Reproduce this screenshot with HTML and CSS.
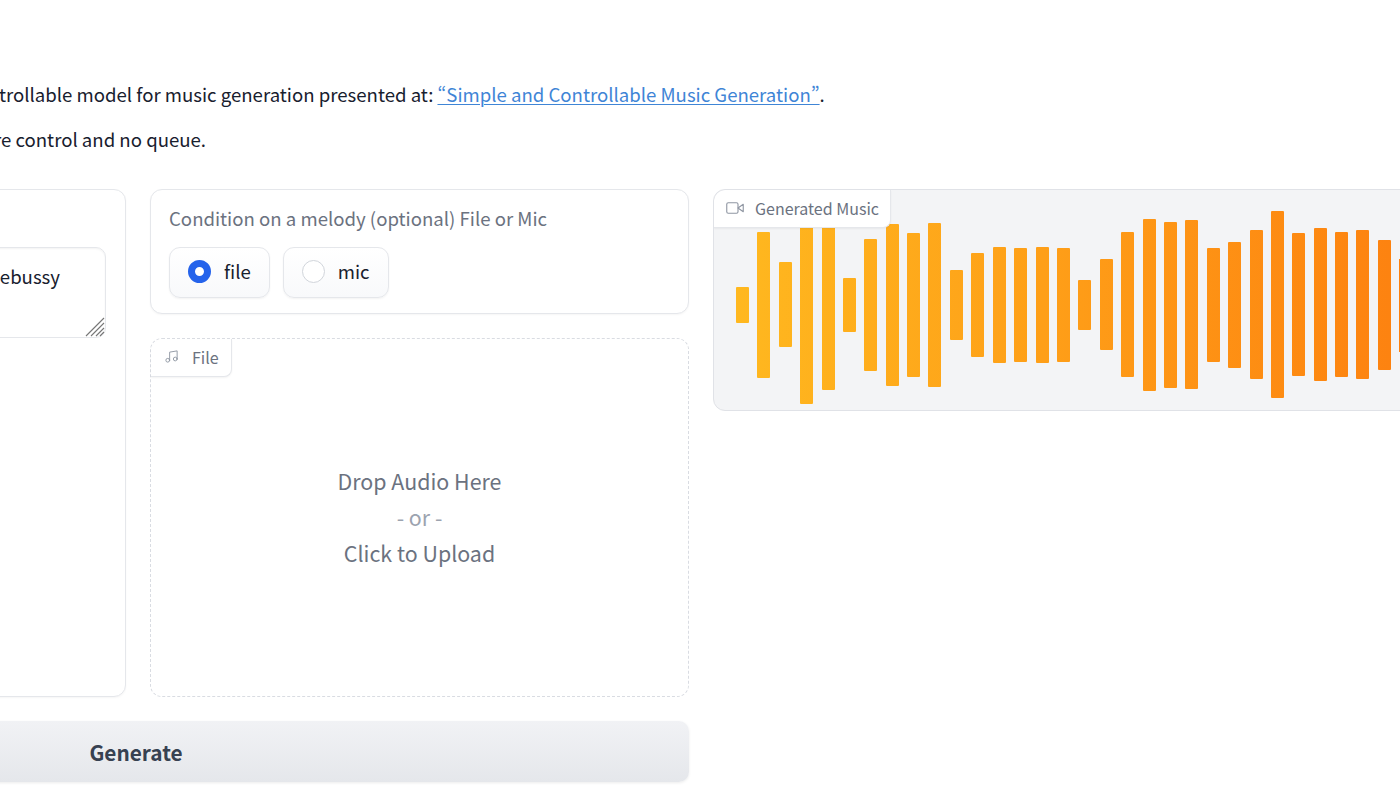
FILE: index.html
```html
<!DOCTYPE html>
<html lang="en">
<head>
<meta charset="utf-8">
<title>MusicGen</title>
<link rel="stylesheet" href="styles.css">
</head>
<body>
<main class="page">
  <section class="intro">
    <p>trollable model for music generation presented at: <a href="#">“Simple and Controllable Music Generation”</a>.</p>
    <p class="clipped">re control and no queue.</p>
  </section>
  <section class="columns">
    <div class="inputs">
      <div class="input-row">
        <div class="card prompt-card">
          <div class="prompt-box">
            <span>ebussy</span>
            <svg class="resize" viewBox="0 0 20 20" width="20" height="20" aria-hidden="true">
              <path d="M1 19 19 1M6 19 19 6M11 19 19 11M15 19 19 15"/>
            </svg>
          </div>
        </div>
        <div class="melody">
          <div class="card radio-card">
            <div class="label">Condition on a melody (optional) File or Mic</div>
            <div class="radios">
              <div class="pill"><span class="dot dot-on"></span>file</div>
              <div class="pill"><span class="dot"></span>mic</div>
            </div>
          </div>
          <div class="upload">
            <div class="tab tab-file">
              <svg viewBox="0 0 24 24" width="15" height="15" aria-hidden="true"><path d="M9 18V5l12-2v13"/><circle cx="6" cy="18" r="3"/><circle cx="18" cy="16" r="3"/></svg>
              <span>File</span>
            </div>
            <div class="drop">
              <div>Drop Audio Here</div>
              <div class="or">- or -</div>
              <div>Click to Upload</div>
            </div>
          </div>
        </div>
      </div>
      <button class="generate" type="button">Generate</button>
    </div>
    <div class="output">
      <div class="tab tab-out">
        <svg viewBox="0 0 24 24" width="18" height="18" aria-hidden="true"><polygon points="23 7 16 12 23 17 23 7"/><rect x="1" y="5" width="15" height="14" rx="2" ry="2"/></svg>
        <span>Generated Music</span>
      </div>
      <svg class="wave" width="680" height="222" viewBox="713 189 680 222" aria-hidden="true">
        <defs>
          <linearGradient id="amber" gradientUnits="userSpaceOnUse" x1="736" y1="0" x2="1400" y2="0">
            <stop offset="0" stop-color="#ffb81f"/>
            <stop offset="1" stop-color="#fd8210"/>
          </linearGradient>
        </defs>
        <g fill="url(#amber)">
          <rect rx="1" x="736" y="287" width="13" height="36"/>
          <rect rx="1" x="757" y="232" width="13" height="146"/>
          <rect rx="1" x="779" y="262" width="13" height="85"/>
          <rect rx="1" x="800" y="206" width="13" height="198"/>
          <rect rx="1" x="822" y="220" width="13" height="170"/>
          <rect rx="1" x="843" y="278" width="13" height="54"/>
          <rect rx="1" x="864" y="239" width="13" height="132"/>
          <rect rx="1" x="886" y="224" width="13" height="162"/>
          <rect rx="1" x="907" y="233" width="13" height="144"/>
          <rect rx="1" x="928" y="223" width="13" height="164"/>
          <rect rx="1" x="950" y="270" width="13" height="70"/>
          <rect rx="1" x="971" y="253" width="13" height="104"/>
          <rect rx="1" x="993" y="247" width="13" height="116"/>
          <rect rx="1" x="1014" y="248" width="13" height="114"/>
          <rect rx="1" x="1036" y="247" width="13" height="116"/>
          <rect rx="1" x="1057" y="248" width="13" height="114"/>
          <rect rx="1" x="1078" y="280" width="13" height="50"/>
          <rect rx="1" x="1100" y="259" width="13" height="91"/>
          <rect rx="1" x="1121" y="232" width="13" height="145"/>
          <rect rx="1" x="1143" y="219" width="13" height="172"/>
          <rect rx="1" x="1164" y="222" width="13" height="166"/>
          <rect rx="1" x="1185" y="220" width="13" height="169"/>
          <rect rx="1" x="1207" y="248" width="13" height="114"/>
          <rect rx="1" x="1228" y="242" width="13" height="126"/>
          <rect rx="1" x="1250" y="230" width="13" height="149"/>
          <rect rx="1" x="1271" y="211" width="13" height="187"/>
          <rect rx="1" x="1292" y="233" width="13" height="143"/>
          <rect rx="1" x="1314" y="228" width="13" height="153"/>
          <rect rx="1" x="1335" y="232" width="13" height="145"/>
          <rect rx="1" x="1356" y="230" width="13" height="149"/>
          <rect rx="1" x="1378" y="240" width="13" height="130"/>
        </g>
      </svg>
      <svg class="wave-extra" width="13" height="93" viewBox="0 0 13 93" aria-hidden="true"><rect width="13" height="93" fill="#fd8210"/></svg>
    </div>
  </section>
</main>
</body>
</html>
```
FILE: styles.css
```css
* { box-sizing: border-box; }
html, body { margin: 0; height: 100%; overflow: hidden; background: #fff; }
body {
  font-family: "Noto Sans CJK SC", "Noto Sans", sans-serif;
  font-feature-settings: "pwid";
  color: #18202e;
  font-size: 18.6px;
}
.page { width: 1400px; height: 800px; overflow: hidden; padding-top: 80px; }
.intro p { margin: 0 0 17px -1px; line-height: 28px; white-space: nowrap; }
.intro p.clipped { margin-left: -6px; }
.intro a { color: #3f85d6; text-decoration: underline; text-underline-offset: 2px; text-decoration-thickness: 1px; }
.columns {
  display: grid;
  grid-template-columns: 1102px 1102px;
  column-gap: 24px;
  margin-left: -413px;
  margin-top: 36px;
  align-items: start;
}
.inputs { display: flex; flex-direction: column; gap: 24px; }
.input-row { display: grid; grid-template-columns: 539px 539px; column-gap: 24px; }
.card {
  background: #fff;
  border: 1px solid #e5e7eb;
  border-radius: 12px;
  box-shadow: 0 1px 2px rgba(0,0,0,.04);
}
.prompt-card { height: 508px; padding: 57px 19px 0; }
.prompt-box {
  position: relative;
  height: 91px;
  border: 1px solid #e5e7eb;
  border-radius: 10px;
  box-shadow: inset 0 1px 2px rgba(0,0,0,.05);
  padding: 14px 45px 0 0;
  text-align: right;
  line-height: 28px;
}
.resize { position: absolute; right: 0; bottom: 0; fill: none; stroke: #777; stroke-width: 1.1; }
.melody { display: flex; flex-direction: column; gap: 24px; }
.radio-card { height: 125px; padding: 14px 18px 0; }
.label { color: #6b7280; line-height: 28px; }
.radios { display: flex; gap: 13px; margin-top: 15px; }
.pill {
  display: flex;
  align-items: center;
  gap: 13px;
  height: 51px;
  padding: 0 18px 4px;
  border: 1px solid #e5e7eb;
  border-radius: 11px;
  background: linear-gradient(#fff, #f8f9fb);
  box-shadow: 0 1px 2px rgba(0,0,0,.05);
}
.dot {
  width: 23px;
  height: 23px;
  margin-top: 2px;
  border-radius: 50%;
  border: 1px solid #d1d5db;
  background: #fff;
}
.dot-on { border: 7px solid #2563eb; }
.upload {
  position: relative;
  height: 359px;
  border: 1px dashed #d9dce2;
  border-radius: 12px;
}
.tab {
  position: absolute;
  top: 0;
  left: 0;
  z-index: 2;
  display: flex;
  align-items: center;
  white-space: nowrap;
  background: #fff;
  color: #6b7280;
  border-right: 1px solid #e5e7eb;
  border-bottom: 1px solid #e5e7eb;
  border-radius: 12px 0 8px 0;
  box-shadow: 0 1px 2px rgba(0,0,0,.05);
}
.tab svg { fill: none; stroke: #9097a3; stroke-width: 1.5; stroke-linecap: round; stroke-linejoin: round; }
.tab-file { width: 81px; height: 38px; padding: 0 0 2px 13px; gap: 13px; font-size: 16px; }
.tab-out { width: 177px; height: 38px; padding: 0 0 2px 12px; gap: 11px; font-size: 16px; }
.drop {
  height: 100%;
  display: flex;
  flex-direction: column;
  align-items: center;
  justify-content: center;
  padding-bottom: 2px;
  color: #6b7280;
  font-size: 21.4px;
  line-height: 36px;
}
.or { color: #9ca3af; }
.generate {
  height: 61px;
  padding: 0 4px 0 0;
  border: 0;
  border-radius: 10px;
  background: linear-gradient(#f1f2f5, #e5e7eb);
  box-shadow: 0 1px 3px rgba(0,0,0,.08);
  color: #374151;
  font: 600 20.8px "Noto Sans CJK SC", "Noto Sans", sans-serif;
}
.output {
  position: relative;
  height: 222px;
  background: #f3f4f6;
  border: 1px solid #e0e2e7;
  border-radius: 12px;
  overflow: hidden;
  display: flex;
}
.wave { flex: none; margin: -1px 0 0 -1px; }
.wave-extra { flex: none; margin: 69px 0 0 6px; }
```
